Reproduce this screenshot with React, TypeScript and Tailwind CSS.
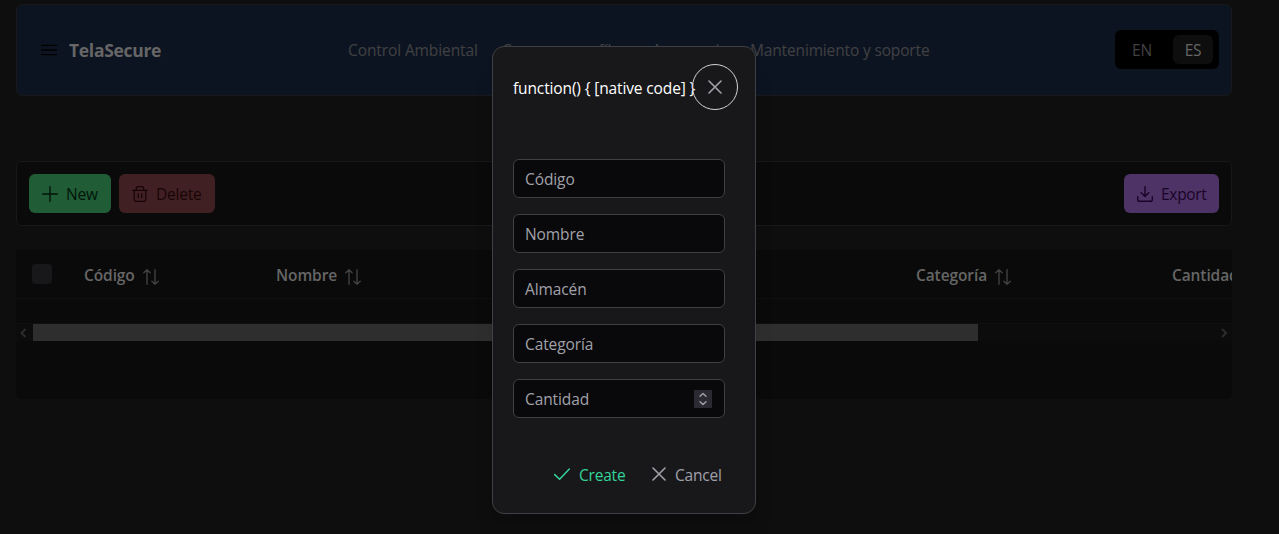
import React from "react";

const PlusIcon = () => (
  <svg width="16" height="16" viewBox="0 0 16 16" fill="none" stroke="currentColor" strokeWidth="1.4" strokeLinecap="round">
    <path d="M8 0.7V15.3M0.7 8H15.3" />
  </svg>
);

const TrashIcon = () => (
  <svg width="16" height="16" viewBox="0 0 16 16" fill="none" stroke="currentColor" strokeWidth="1.3" strokeLinecap="round" strokeLinejoin="round">
    <path d="M0.7 4.4H15.3M2.2 4.4V13.6Q2.2 15.4 4 15.4H12Q13.8 15.4 13.8 13.6V4.4M4.3 4.4V2.2Q4.3 0.6 5.9 0.6H10.1Q11.7 0.6 11.7 2.2V4.4M6.3 7.6V11.8M9.7 7.6V11.8" />
  </svg>
);

const DownloadIcon = () => (
  <svg width="16" height="16" viewBox="0 0 16 16" fill="none" stroke="currentColor" strokeWidth="1.4" strokeLinecap="round" strokeLinejoin="round">
    <path d="M8 0.6V10.4M4.2 6.8L8 10.6L11.8 6.8M0.7 10.6V13.4Q0.7 15.3 2.6 15.3H13.4Q15.3 15.3 15.3 13.4V10.6" />
  </svg>
);

const BarsIcon = () => (
  <svg width="16" height="16" viewBox="0 0 16 16" fill="none" stroke="currentColor" strokeWidth="1.4" strokeLinecap="round">
    <path d="M0.6 3.4H15.4M0.6 8H15.4M0.6 12.6H15.4" />
  </svg>
);

const SortIcon = () => (
  <svg className="mt-[3px] shrink-0 text-[#414143]" width="16" height="16" viewBox="0 0 16 16" fill="none" stroke="currentColor" strokeWidth="1.4" strokeLinecap="round" strokeLinejoin="round">
    <path d="M4 15.3V0.8M0.8 3.8L4 0.7L7.1 3.8M12 0.7V15.2M8.9 12.2L12 15.3L15.2 12.2" />
  </svg>
);

const CloseIcon = () => (
  <svg width="14" height="14" viewBox="0 0 14 14" fill="none" stroke="currentColor" strokeWidth="1.6" strokeLinecap="round">
    <path d="M1 1L13 13M13 1L1 13" />
  </svg>
);

const CheckIcon = () => (
  <svg width="16" height="16" viewBox="0 0 16 16" fill="none" stroke="currentColor" strokeWidth="1.5" strokeLinecap="round" strokeLinejoin="round">
    <path d="M0.7 8.6L5.6 13.3L15.3 3" />
  </svg>
);

const columns = [
  { label: "Código", width: "w-48" },
  { label: "Nombre", width: "w-64" },
  { label: "Almacén", width: "w-96" },
  { label: "Categoría", width: "w-64" },
  { label: "Cantidad", width: "w-64" },
];
const navItems = ["Control Ambiental", "Consumo perfíles", "Asegurado", "Mantenimiento y soporte"];
const fields = ["Código", "Nombre", "Almacén", "Categoría"];
const fieldClass = "flex h-[39px] items-center justify-between rounded-md border border-[#3f3f46] bg-[#09090b] px-[11px] pt-px";

export default function App() {
  return (
    <div className="relative h-[534px] w-full overflow-hidden bg-[#0e0e0e] pl-4 pr-[47px] pt-1 font-['Open_Sans','Noto_Sans',sans-serif] text-[15.5px] leading-6 tracking-[-0.2px]">
      <header className="flex h-[92px] items-center rounded-md border border-[#18191b] bg-[#0d1421] pl-6 pr-3">
        <span className="text-black"><BarsIcon /></span>
        <span className="ml-3 w-[279px] text-[17.5px] font-bold tracking-[-0.3px] text-[#666666]">TelaSecure</span>
        <nav className="flex grow whitespace-nowrap tracking-[-0.1px] text-[#414143]">
          <span className="w-[154px]">{navItems[0]}</span>
          <span className="w-[150px]">{navItems[1]}</span>
          <span className="w-[98px]">{navItems[2]}</span>
          <span className="tracking-[-0.15px]">{navItems[3]}</span>
        </nav>
        <div className="-mt-px flex h-[39px] w-[104px] items-center rounded-md bg-black p-[5px]">
          <span className="w-[45px] pl-3 pt-px text-[#414143]">EN</span>
          <span className="ml-2 flex h-[29px] w-[40px] items-center justify-center rounded-md bg-[#0e0e0e] pt-px text-[#666666]">ES</span>
        </div>
      </header>

      <section className="mt-[65px] flex h-[65px] items-center rounded-md border border-[#18181a] bg-[#0a0a0a] px-3">
        <button className="flex h-[39px] w-[82px] items-center gap-2 rounded-md bg-[#205c35] pl-[13px] text-[#02150a]"><PlusIcon /><span className="pt-px">New</span></button>
        <button className="ml-2 flex h-[39px] w-24 items-center gap-2 rounded-md bg-[#402023] pl-[13px] text-[#190506]"><TrashIcon /><span className="pt-px">Delete</span></button>
        <button className="ml-auto flex h-[39px] w-[95px] items-center gap-2 rounded-md bg-[#4e3466] pl-[13px] tracking-[-0.3px] text-[#1a0329]"><DownloadIcon /><span className="pt-px">Export</span></button>
      </section>

      <section className="mt-6 h-[149px] rounded-b-md bg-[#0a0a0a]">
        <div className="flex h-[49px] items-center overflow-hidden border-b border-[#101011] pl-4 font-semibold tracking-[-0.1px] text-[#666666]">
          <span className="mr-8 size-5 shrink-0 rounded bg-[#18181a]" />
          {columns.map((column) => (
            <span key={column.label} className={`flex shrink-0 items-center gap-2 pt-0.5 ${column.width}`}>
              {column.label}
              <SortIcon />
            </span>
          ))}
        </div>
        <div className="h-[25px] border-b border-[#101011]" />
        <div className="flex h-[17px] items-center bg-[#0c0c0c] text-[#2c2c2c]">
          <span className="flex w-[17px] justify-center pr-[3px]"><svg width="8" height="10" viewBox="0 0 8 10" fill="none" stroke="currentColor" strokeWidth="2"><path d="M6.5 1L2.5 5L6.5 9" /></svg></span>
          <span className="h-full w-[945px] bg-[#2e2e2e]" />
          <span className="ml-auto flex w-[17px] justify-center"><svg width="8" height="10" viewBox="0 0 8 10" fill="none" stroke="currentColor" strokeWidth="2"><path d="M2 1L6 5L2 9" /></svg></span>
        </div>
      </section>

      <div role="dialog" className="absolute left-[492px] top-[46px] flex h-[468px] w-[264px] flex-col rounded-xl border border-[#3f3f46] bg-[#18181a] px-5 shadow-[0_20px_25px_-5px_rgba(0,0,0,0.1),0_8px_10px_-6px_rgba(0,0,0,0.1)]">
        <div className="mt-[17px] flex h-[46px] items-center">
          <span className="w-[179px] shrink-0 whitespace-nowrap pt-0.5 tracking-[-0.13px] text-white">{"function() { [native code] }"}</span>
          <button className="flex size-[46px] shrink-0 items-center justify-center rounded-full border border-[#d4d4d8] text-[#a1a1aa]"><CloseIcon /></button>
        </div>
        <div className="mt-[49px] flex w-[212px] flex-col gap-4 tracking-[-0.1px] text-[#a1a1aa]">
          {fields.map((f) => (
            <div key={f} className={fieldClass}>{f}</div>
          ))}
          <div className={fieldClass}>
            Cantidad
            <span className="-mt-px mr-px flex h-[18px] w-[18px] items-center justify-center bg-[#2b2a33] text-[#a1a1aa]">
              <svg width="10" height="14" viewBox="0 0 10 14" fill="none" stroke="currentColor" strokeWidth="1.4" strokeLinecap="round" strokeLinejoin="round"><path d="M2 4.3L5 1.5L8 4.3M2 9.7L5 12.5L8 9.7" /></svg>
            </span>
          </div>
        </div>
        <div className="mt-[44px] flex h-6 items-center">
          <button className="ml-[41px] flex w-[98px] items-center gap-[9px] text-[#34d399]"><CheckIcon /><span className="pt-px">Create</span></button>
          <button className="flex items-center gap-[9px] text-[#a1a1aa]"><CloseIcon /><span className="pt-px">Cancel</span></button>
        </div>
      </div>
    </div>
  );
}
